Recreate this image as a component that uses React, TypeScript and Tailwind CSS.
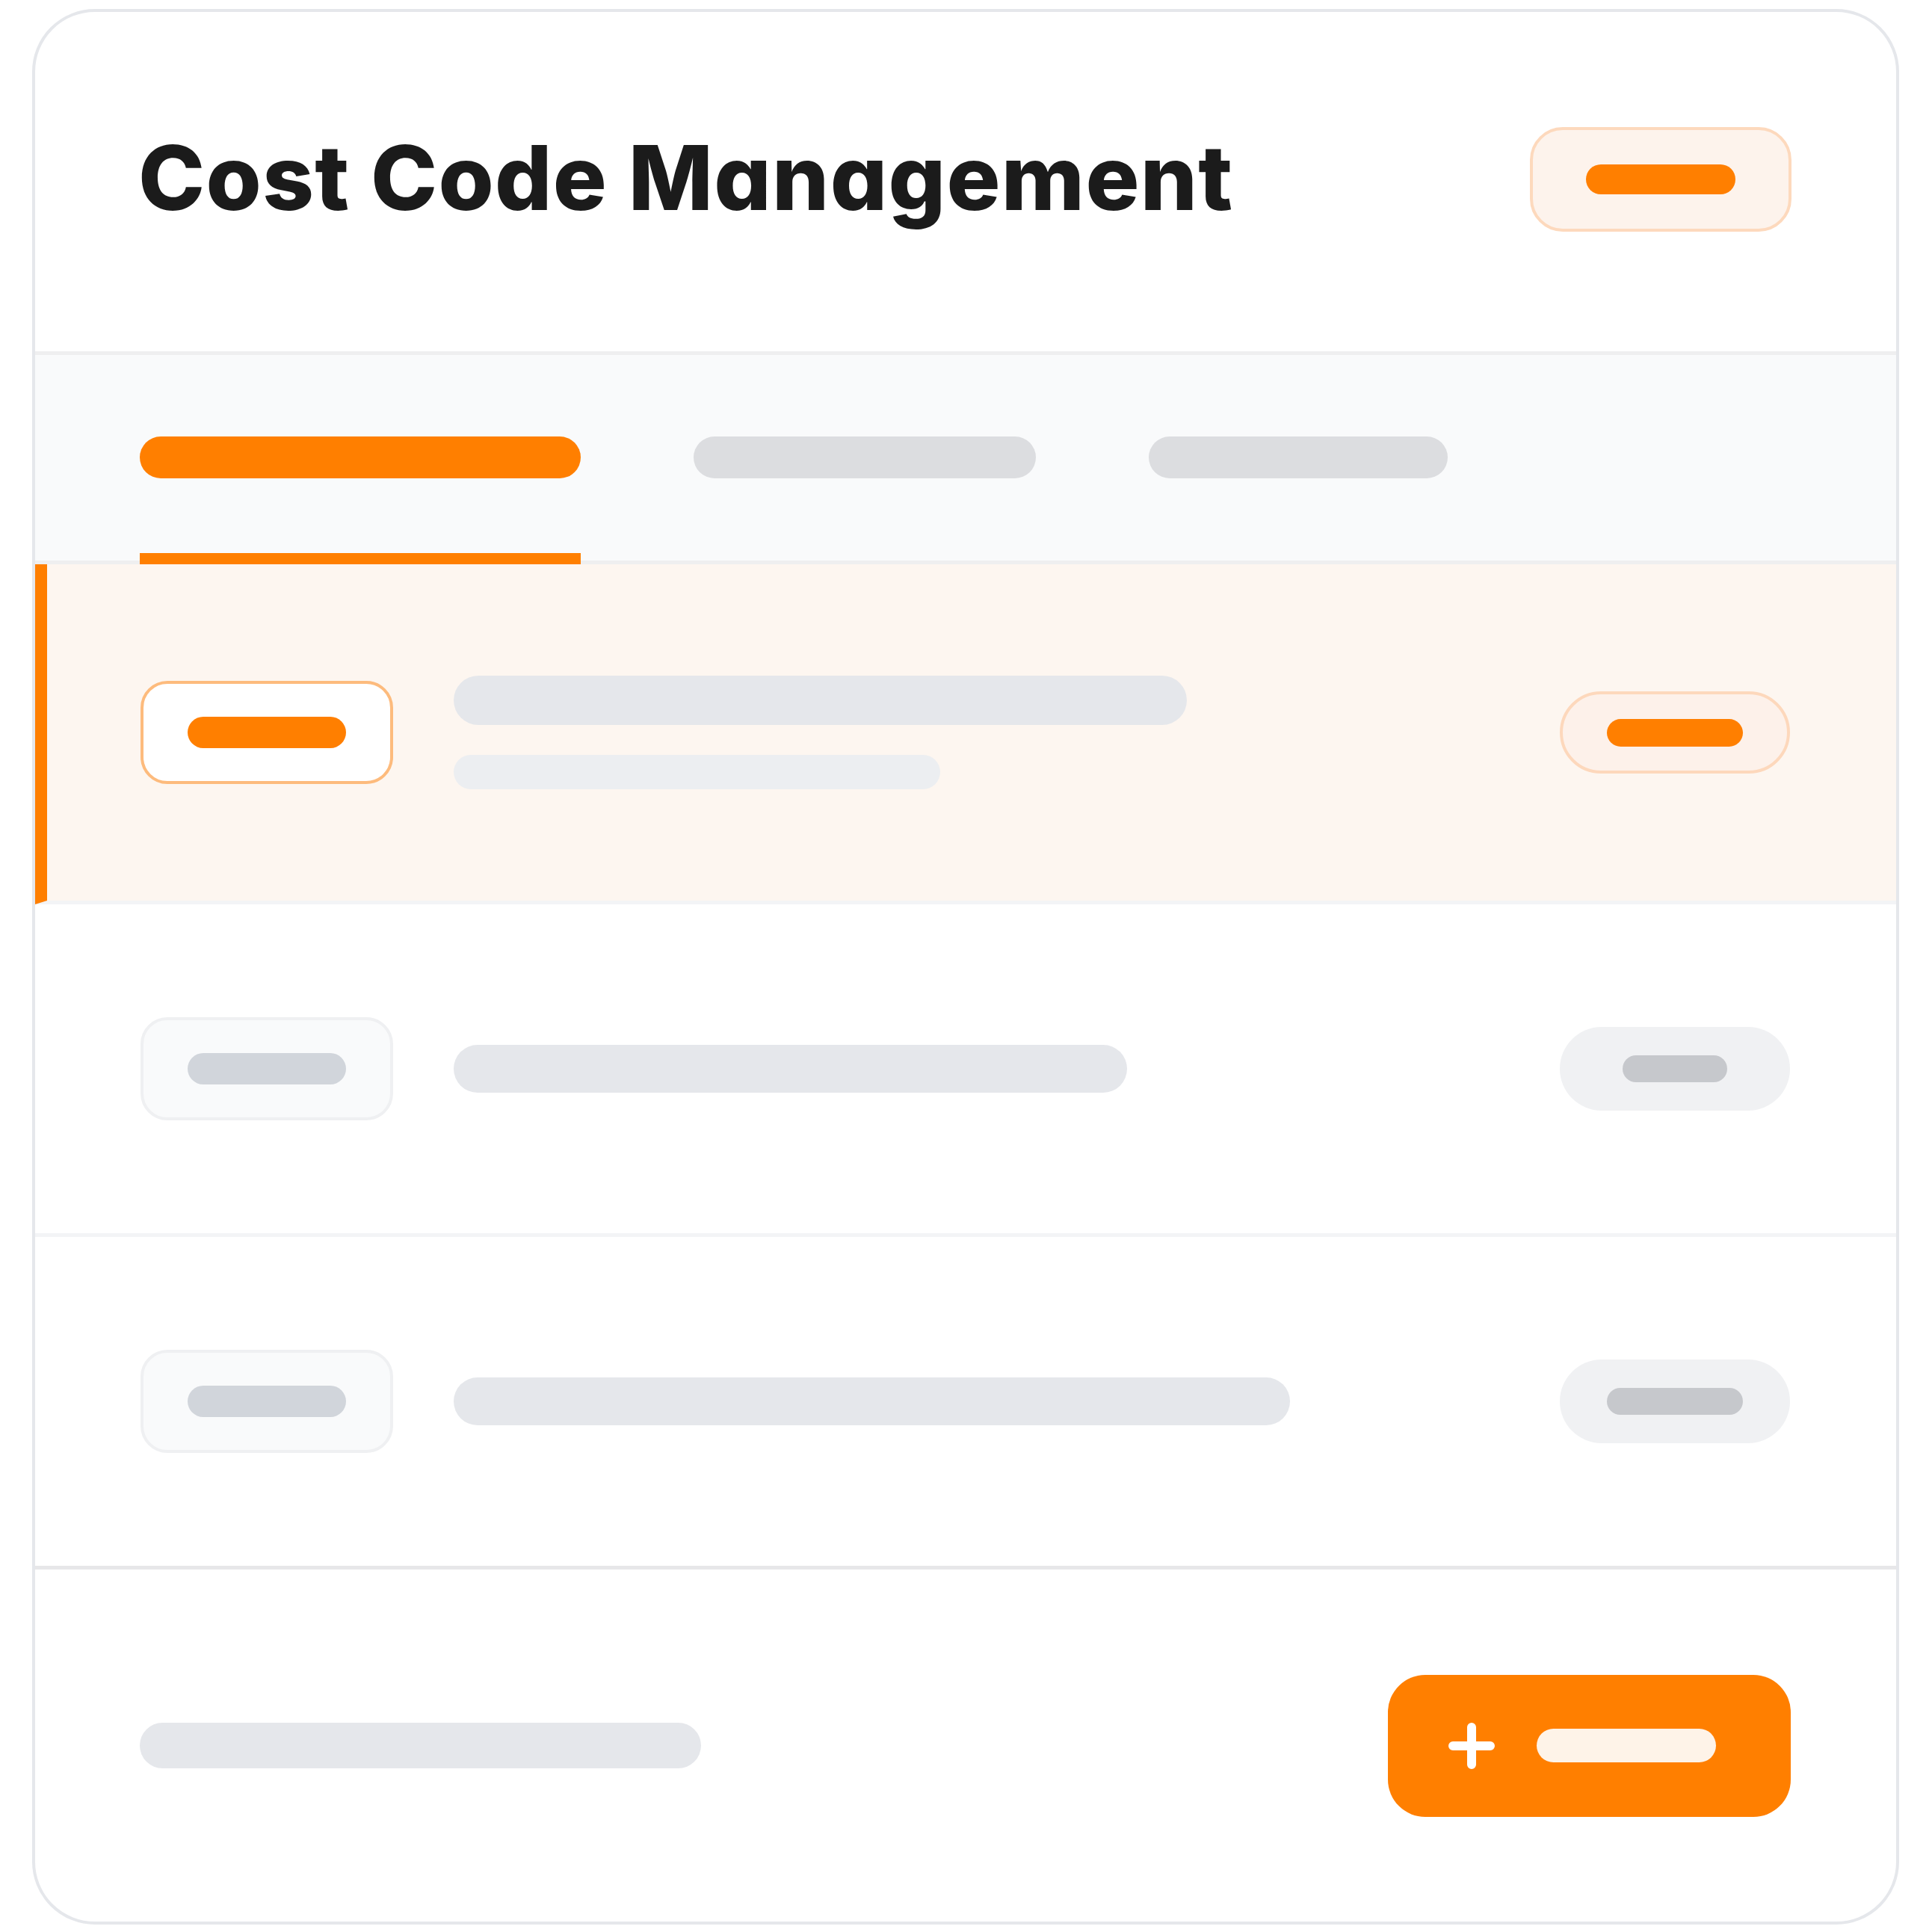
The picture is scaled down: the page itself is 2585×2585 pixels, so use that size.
const orange = 'bg-[#ff7f00]';

type Row = {
    active: boolean;
    bars: { w: number; h: number; color: string }[];
    status: number;
    height: string;
};

const rows: Row[] = [
    {
        active: true,
        bars: [
            { w: 981, h: 66, color: 'bg-[#e5e7eb]' },
            { w: 651, h: 46, color: 'bg-[#eceef1]' },
        ],
        status: 182,
        height: 'h-[455px]',
    },
    {
        active: false,
        bars: [{ w: 901, h: 64, color: 'bg-[#e5e7eb]' }],
        status: 140,
        height: 'h-[445px]',
    },
    {
        active: false,
        bars: [{ w: 1119, h: 64, color: 'bg-[#e5e7eb]' }],
        status: 182,
        height: 'h-[445px]',
    },
];

function CodeRow({ row }: { row: Row }) {
    return (
        <div
            className={
                row.active
                    ? `flex items-center ${row.height} border-b-[5px] border-b-[#f3f4f6] border-l-[16px] border-l-[#ff7f00] bg-[#fdf6f0] pl-[125px] pr-[142px]`
                    : `flex items-center ${row.height} border-b-[5px] border-b-[#f3f4f6] bg-white pl-[141px] pr-[142px]`
            }
        >
            {/* Code badge */}
            <div
                className={
                    row.active
                        ? 'flex items-center justify-center w-[338px] h-[138px] rounded-[36px] border-4 border-[#fdbb7d] bg-white shrink-0'
                        : 'flex items-center justify-center w-[338px] h-[138px] rounded-[36px] border-4 border-[#eff0f2] bg-[#f9fafb] shrink-0'
                }
            >
                <div className={row.active ? `w-[212px] h-[42px] rounded-full ${orange}` : 'w-[212px] h-[42px] rounded-full bg-[#d1d5db]'} />
            </div>

            {/* Description */}
            <div className="flex flex-col gap-[40px] ml-[81px] flex-1">
                {row.bars.map((b, i) => (
                    <div key={i} className={`rounded-full ${b.color}`} style={{ width: b.w, height: b.h }} />
                ))}
            </div>

            {/* Status pill */}
            <div
                className={
                    row.active
                        ? 'flex items-center justify-center w-[308px] h-[110px] rounded-full border-4 border-[#fdd8bc] bg-[#fdf1ea] shrink-0'
                        : 'flex items-center justify-center w-[308px] h-[112px] rounded-full bg-[#f0f1f3] shrink-0'
                }
            >
                <div
                    className={row.active ? `h-[37px] rounded-full ${orange}` : 'h-[36px] rounded-full bg-[#c6c8cc]'}
                    style={{ width: row.status }}
                />
            </div>
        </div>
    );
}

export default function App() {
    return (
        <div className="min-h-screen bg-white pt-[12px] pl-[43px]">
            <div className="flex flex-col w-[2498px] h-[2563px] rounded-[84px] border-4 border-[#e5e7eb] bg-white overflow-hidden">
                {/* Header */}
                <div className="flex items-center justify-between h-[459px] shrink-0 border-b-[5px] border-[#efeff0] pl-[138px] pr-[140px] pb-[6px]">
                    <h1
                        className="text-[120px] leading-none font-extrabold text-[#1b1b1b] tracking-[1.3px] mb-[4px]"
                        style={{ fontFamily: 'Inter, "Noto Sans", sans-serif', fontFeatureSettings: '"cv11"' }}
                    >
                        Cost Code Management
                    </h1>
                    <div className="flex items-center justify-center w-[350px] h-[140px] rounded-[44px] border-4 border-[#fdd9bd] bg-[#fdf3ec]">
                        <div className={`w-[200px] h-[40px] rounded-full ${orange}`} />
                    </div>
                </div>

                {/* Tabs */}
                <div className="flex gap-[151px] h-[280px] shrink-0 border-b-[5px] border-[#efeff0] bg-[#f9fafb] pl-[140px]">
                    <div className="flex flex-col h-full pt-[109px]">
                        <div className={`w-[590px] h-[56px] rounded-full ${orange}`} />
                        <div className={`mt-auto -mb-[5px] w-[590px] h-[15px] ${orange}`} />
                    </div>
                    <div className="flex flex-col h-full pt-[109px]">
                        <div className="w-[458px] h-[56px] rounded-full bg-[#dcdde0]" />
                    </div>
                    <div className="flex flex-col h-full pt-[109px]">
                        <div className="w-[400px] h-[56px] rounded-full bg-[#dcdde0]" />
                    </div>
                </div>

                {/* Rows */}
                {rows.map((r, i) => (
                    <CodeRow key={i} row={r} />
                ))}

                {/* Footer */}
                <div className="flex flex-1 items-center justify-between border-t-[5px] border-[#e7e7e9] pl-[140px] pr-[141px] -mt-[5px]">
                    <div className="w-[751px] h-[61px] rounded-full bg-[#e5e7eb]" />
                    <button className={`flex items-center w-[539px] h-[190px] rounded-[50px] ${orange} pl-[81px]`}>
                        <svg width="62" height="62" viewBox="0 0 62 62" fill="none">
                            <path d="M31 6V56M6 31H56" stroke="white" strokeWidth="12" strokeLinecap="round" />
                        </svg>
                        <div className="ml-[56px] w-[240px] h-[45px] rounded-full bg-[#fef3e8]" />
                    </button>
                </div>
            </div>
        </div>
    );
}
